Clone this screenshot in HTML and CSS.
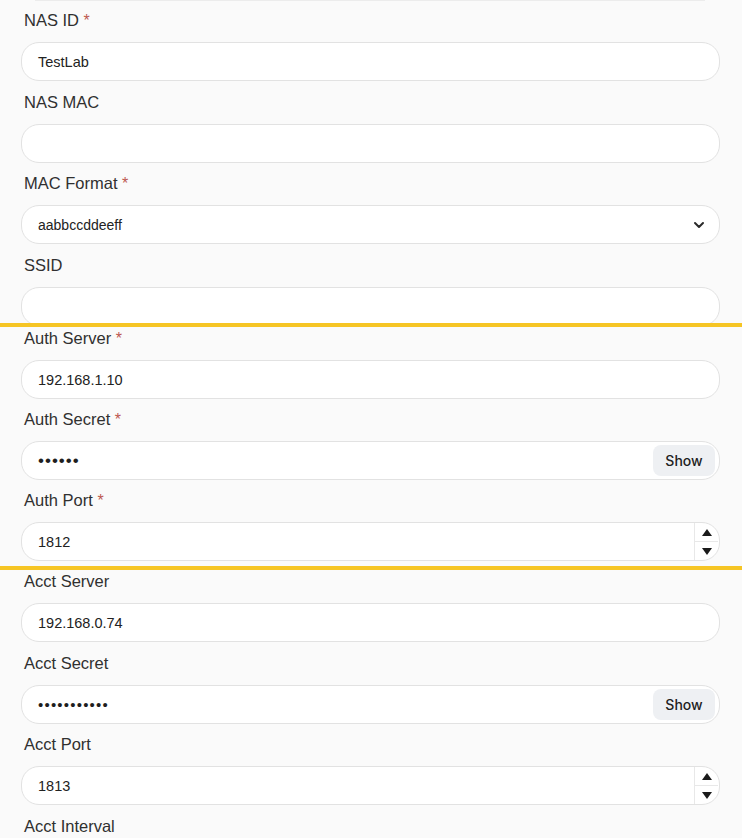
FILE: index.html
```html
<!DOCTYPE html>
<html>
<head>
<meta charset="utf-8">
<link rel="stylesheet" href="styles.css">
</head>
<body>
<div class="page">
  <div class="topline"></div>
  <section class="sec sec1">
    <div class="group">
      <div class="label">NAS ID <span class="req">*</span></div>
      <div class="field"><span class="val">TestLab</span></div>
    </div>
    <div class="group">
      <div class="label">NAS MAC</div>
      <div class="field"></div>
    </div>
    <div class="group">
      <div class="label">MAC Format <span class="req">*</span></div>
      <div class="field select"><span class="val">aabbccddeeff</span>
        <svg class="chev" width="12" height="8" viewBox="0 0 12 8"><path d="M2 2 L6 6 L10 2" fill="none" stroke="#2a2a2a" stroke-width="2" stroke-linecap="round" stroke-linejoin="round"/></svg>
      </div>
    </div>
    <div class="group">
      <div class="label">SSID</div>
      <div class="field"></div>
    </div>
  </section>
  <div class="bar"></div>
  <section class="sec sec2">
    <div class="group">
      <div class="label">Auth Server <span class="req">*</span></div>
      <div class="field"><span class="val">192.168.1.10</span></div>
    </div>
    <div class="group">
      <div class="label">Auth Secret <span class="req">*</span></div>
      <div class="field pw"><span class="val dots">••••••</span><span class="show">Show</span></div>
    </div>
    <div class="group">
      <div class="label">Auth Port <span class="req">*</span></div>
      <div class="field num"><span class="val">1812</span>
        <div class="spin"><span class="up"></span><span class="down"></span></div>
      </div>
    </div>
  </section>
  <div class="bar"></div>
  <section class="sec sec3">
    <div class="group">
      <div class="label">Acct Server</div>
      <div class="field"><span class="val">192.168.0.74</span></div>
    </div>
    <div class="group">
      <div class="label">Acct Secret</div>
      <div class="field pw"><span class="val dots small">•••••••••••</span><span class="show">Show</span></div>
    </div>
    <div class="group">
      <div class="label">Acct Port</div>
      <div class="field num"><span class="val">1813</span>
        <div class="spin"><span class="up"></span><span class="down"></span></div>
      </div>
    </div>
    <div class="group">
      <div class="label">Acct Interval</div>
    </div>
  </section>
</div>
</body>
</html>
```
FILE: styles.css
```css
html, body {
  margin: 0;
  padding: 0;
  background: #fafafa;
}
.page {
  width: 742px;
  height: 838px;
  overflow: hidden;
  font-family: "Liberation Sans", Arial, sans-serif;
  color: #2b2b2b;
}
.topline {
  height: 1px;
  margin: 0 37px 0 35px;
  background: #ececec;
}
.sec {
  padding: 0 22px 0 21px;
  overflow: hidden;
  display: flex;
  flex-direction: column;
  gap: 9.5px;
}
.sec1 {
  height: 314px;
  padding-top: 8px;
}
.sec2 {
  height: 239px;
  gap: 9px;
}
.sec3 {
  padding-top: 0;
  gap: 9.5px;
}
.group {
  display: flex;
  flex-direction: column;
  gap: 11px;
}
.label {
  height: 22px;
  line-height: 22px;
  font-size: 16.5px;
  padding-left: 3px;
  color: #303030;
}
.req {
  color: #bd5850;
  font-size: 16px;
}
.bar {
  height: 4px;
  background: #f6c524;
}
.field {
  box-sizing: border-box;
  height: 39px;
  width: 699px;
  background: #ffffff;
  border: 1.5px solid #e2e2e2;
  border-radius: 18px;
  display: flex;
  align-items: center;
  padding-left: 16px;
  position: relative;
  font-size: 14.5px;
  color: #222;
}
.val {
  flex: 1;
}
.select .val {
  font-size: 14px;
}
.chev {
  margin-right: 14px;
}
.dots {
  font-size: 17px;
  letter-spacing: 1px;
  color: #1e1e1e;
}
.dots.small {
  font-size: 15px;
  letter-spacing: 1.2px;
}
.show {
  background: #eef0f3;
  border-radius: 8px;
  height: 31px;
  width: 62px;
  margin-right: 4px;
  display: flex;
  align-items: center;
  justify-content: center;
  font-family: Inter, "Liberation Sans", sans-serif;
  font-size: 14px;
  font-weight: 500;
  color: #222;
}
.spin {
  width: 23px;
  height: 100%;
  border-left: 1px solid #e8e8e8;
  display: flex;
  flex-direction: column;
  margin-right: 1px;
}
.spin span {
  flex: 1;
  display: flex;
  align-items: center;
  justify-content: center;
}
.spin .up {
  border-bottom: 1px solid #e8e8e8;
}
.spin .up::before {
  content: "";
  border-left: 5px solid transparent;
  border-right: 5px solid transparent;
  border-bottom: 7px solid #1a1a1a;
}
.spin .down::before {
  content: "";
  border-left: 5px solid transparent;
  border-right: 5px solid transparent;
  border-top: 7px solid #1a1a1a;
}
```
